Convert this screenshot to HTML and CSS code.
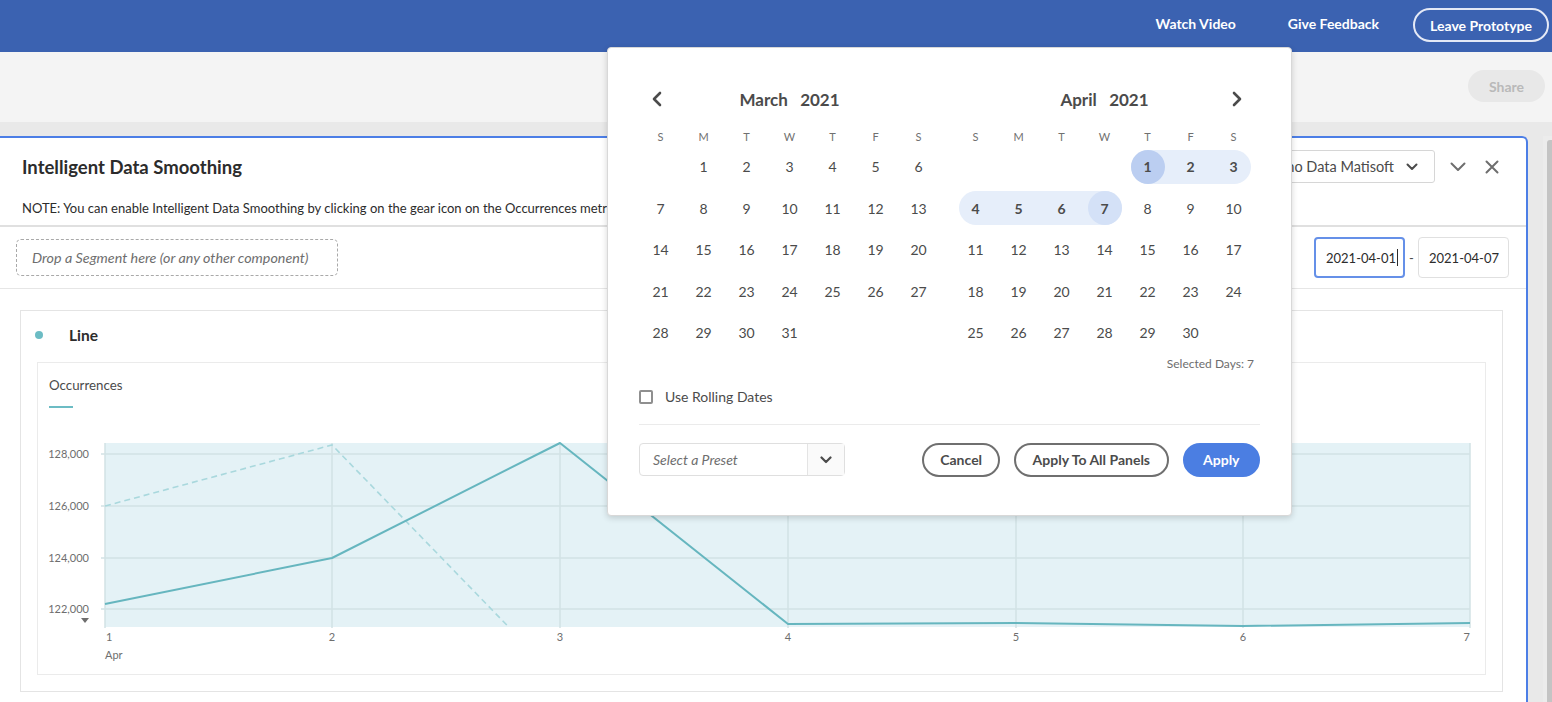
FILE: index.html
```html
<!DOCTYPE html>
<html lang="en">
<head>
<meta charset="utf-8">
<title>Intelligent Data Smoothing</title>
<link rel="stylesheet" href="styles.css">
</head>
<body>
<header class="topbar">
  <span class="top-link watch">Watch Video</span>
  <span class="top-link feedback">Give Feedback</span>
  <span class="leave">Leave Prototype</span>
</header>
<div class="toolbar">
  <span class="share">Share</span>
</div>
<div class="workspace">
  <section class="panel">
    <div class="panel-head">
      <div class="title-row">
        <h1 class="title">Intelligent Data Smoothing</h1>
        <div class="head-right">
          <div class="suite">Demo Data Matisoft
            <svg class="suite-chev" width="12" height="8" viewBox="0 0 12 8"><path d="M1.5 1.5 L6 6 L10.5 1.5" fill="none" stroke="#4b4b4b" stroke-width="2" stroke-linecap="round" stroke-linejoin="round"/></svg>
          </div>
          <svg class="collapse" width="16" height="10" viewBox="0 0 16 10"><path d="M1.5 1.5 L8 8 L14.5 1.5" fill="none" stroke="#6e6e6e" stroke-width="2" stroke-linecap="round" stroke-linejoin="round"/></svg>
          <svg class="close" width="14" height="14" viewBox="0 0 14 14"><path d="M1.5 1.5 L12.5 12.5 M12.5 1.5 L1.5 12.5" fill="none" stroke="#6e6e6e" stroke-width="2" stroke-linecap="round"/></svg>
        </div>
      </div>
      <p class="note">NOTE: You can enable Intelligent Data Smoothing by clicking on the gear icon on the Occurrences metric.</p>
    </div>
    <div class="segment-row">
      <div class="dropzone">Drop a Segment here (or any other component)</div>
      <div class="dates">
        <div class="date-in focus">2021-04-01<span class="caret"></span></div>
        <span class="dash">-</span>
        <div class="date-in">2021-04-07</div>
      </div>
    </div>
    <div class="content">
      <div class="viz">
        <div class="viz-head"><span class="dot"></span><span class="viz-title">Line</span></div>
        <div class="chart">
          <div class="legend">Occurrences</div>
          <div class="legend-line"></div>
          <svg class="plot" width="1447" height="264" viewBox="0 0 1447 264">
            <defs><clipPath id="pc"><rect x="67" y="33" width="1365" height="184"/></clipPath></defs>
            <rect x="67" y="33" width="1365" height="184" fill="#e4f2f6"/>
            <g stroke="#d2e2e5" stroke-width="1.5">
              <line x1="63" y1="44" x2="1432" y2="44"/>
              <line x1="63" y1="96" x2="1432" y2="96"/>
              <line x1="63" y1="148" x2="1432" y2="148"/>
              <line x1="63" y1="199" x2="1432" y2="199"/>
              <line x1="67" y1="33" x2="67" y2="218"/>
              <line x1="294" y1="33" x2="294" y2="218"/>
              <line x1="522" y1="33" x2="522" y2="218"/>
              <line x1="750" y1="33" x2="750" y2="218"/>
              <line x1="978" y1="33" x2="978" y2="218"/>
              <line x1="1205" y1="33" x2="1205" y2="218"/>
              <line x1="1432" y1="33" x2="1432" y2="218"/>
            </g>
            <g class="ylab" text-anchor="end">
              <text x="51" y="48">128,000</text>
              <text x="51" y="100">126,000</text>
              <text x="51" y="152">124,000</text>
              <text x="51" y="203">122,000</text>
            </g>
            <path d="M43 208 L51 208 L47 213 Z" fill="#6e6e6e"/>
            <g class="xlab">
              <text x="68" y="231">1</text>
              <text x="67" y="249">Apr</text>
              <text x="294" y="231" text-anchor="middle">2</text>
              <text x="522" y="231" text-anchor="middle">3</text>
              <text x="750" y="231" text-anchor="middle">4</text>
              <text x="978" y="231" text-anchor="middle">5</text>
              <text x="1205" y="231" text-anchor="middle">6</text>
              <text x="1432" y="231" text-anchor="end">7</text>
            </g>
            <g clip-path="url(#pc)">
              <polyline points="67,96 294,35 560,309" fill="none" stroke="#a9d8dd" stroke-width="1.6" stroke-dasharray="6 4"/>
            </g>
            <polyline points="67,194 294,148 522,33 750,214 978,213 1205,216 1432,213" fill="none" stroke="#66b6bf" stroke-width="2" stroke-linejoin="round"/>
          </svg>
        </div>
      </div>
    </div>
  </section>
  <div class="scroll-track"><div class="scroll-thumb"></div></div>
</div>

<div class="popup">
  <div class="months">
    <div class="month">
      <div class="month-head">
        <svg class="arrow" width="12" height="16" viewBox="0 0 12 16"><path d="M9 2 L3 8 L9 14" fill="none" stroke="#4b4b4b" stroke-width="2.6" stroke-linecap="round" stroke-linejoin="round"/></svg>
        <div class="month-title">March&nbsp;&nbsp; 2021</div>
        <span></span>
      </div>
      <div class="wk"><span>S</span><span>M</span><span>T</span><span>W</span><span>T</span><span>F</span><span>S</span></div>
      <div class="days">
        <div class="c"></div><div class="c"><span>1</span></div><div class="c"><span>2</span></div><div class="c"><span>3</span></div><div class="c"><span>4</span></div><div class="c"><span>5</span></div><div class="c"><span>6</span></div>
        <div class="c"><span>7</span></div><div class="c"><span>8</span></div><div class="c"><span>9</span></div><div class="c"><span>10</span></div><div class="c"><span>11</span></div><div class="c"><span>12</span></div><div class="c"><span>13</span></div>
        <div class="c"><span>14</span></div><div class="c"><span>15</span></div><div class="c"><span>16</span></div><div class="c"><span>17</span></div><div class="c"><span>18</span></div><div class="c"><span>19</span></div><div class="c"><span>20</span></div>
        <div class="c"><span>21</span></div><div class="c"><span>22</span></div><div class="c"><span>23</span></div><div class="c"><span>24</span></div><div class="c"><span>25</span></div><div class="c"><span>26</span></div><div class="c"><span>27</span></div>
        <div class="c"><span>28</span></div><div class="c"><span>29</span></div><div class="c"><span>30</span></div><div class="c"><span>31</span></div>
      </div>
    </div>
    <div class="month">
      <div class="month-head">
        <span></span>
        <div class="month-title">April&nbsp;&nbsp; 2021</div>
        <svg class="arrow" width="12" height="16" viewBox="0 0 12 16"><path d="M3 2 L9 8 L3 14" fill="none" stroke="#4b4b4b" stroke-width="2.6" stroke-linecap="round" stroke-linejoin="round"/></svg>
      </div>
      <div class="wk"><span>S</span><span>M</span><span>T</span><span>W</span><span>T</span><span>F</span><span>S</span></div>
      <div class="days">
        <div class="c"></div><div class="c"></div><div class="c"></div><div class="c"></div><div class="c in l cap1"><span>1</span></div><div class="c in"><span>2</span></div><div class="c in rt"><span>3</span></div>
        <div class="c in l"><span>4</span></div><div class="c in"><span>5</span></div><div class="c in"><span>6</span></div><div class="c in rt cap2"><span>7</span></div><div class="c"><span>8</span></div><div class="c"><span>9</span></div><div class="c"><span>10</span></div>
        <div class="c"><span>11</span></div><div class="c"><span>12</span></div><div class="c"><span>13</span></div><div class="c"><span>14</span></div><div class="c"><span>15</span></div><div class="c"><span>16</span></div><div class="c"><span>17</span></div>
        <div class="c"><span>18</span></div><div class="c"><span>19</span></div><div class="c"><span>20</span></div><div class="c"><span>21</span></div><div class="c"><span>22</span></div><div class="c"><span>23</span></div><div class="c"><span>24</span></div>
        <div class="c"><span>25</span></div><div class="c"><span>26</span></div><div class="c"><span>27</span></div><div class="c"><span>28</span></div><div class="c"><span>29</span></div><div class="c"><span>30</span></div>
      </div>
    </div>
  </div>
  <div class="selected">Selected Days: 7</div>
  <label class="rolling"><span class="box"></span>Use Rolling Dates</label>
  <div class="divider"></div>
  <div class="actions">
    <div class="preset">
      <span class="preset-text">Select a Preset</span>
      <span class="preset-btn"><svg width="12" height="8" viewBox="0 0 12 8"><path d="M1.5 1.5 L6 6 L10.5 1.5" fill="none" stroke="#4b4b4b" stroke-width="2.2" stroke-linecap="round" stroke-linejoin="round"/></svg></span>
    </div>
    <div class="btns">
      <span class="btn cancel">Cancel</span>
      <span class="btn all">Apply To All Panels</span>
      <span class="btn primary">Apply</span>
    </div>
  </div>
</div>
</body>
</html>
```
FILE: styles.css
```css
* { box-sizing: border-box; }
body {
  margin: 0;
  width: 1552px;
  height: 702px;
  overflow: hidden;
  position: relative;
  font-family: "Lato", "Noto Sans", sans-serif;
  color: #2c2c2c;
  background: #e9e9e9;
}
.topbar {
  height: 52px;
  background: #3b62b1;
  display: flex;
  justify-content: flex-end;
  align-items: center;
  padding: 0 3px 5px 0;
}
.top-link {
  color: #fff;
  font-size: 14px;
  font-weight: 700;
}
.watch { margin-right: 52px; }
.feedback { margin-right: 34px; }
.leave {
  height: 34px;
  margin-top: 3px;
  border: 2px solid #e4e9f6;
  border-radius: 17px;
  padding: 0 15px;
  display: flex;
  align-items: center;
  color: #fff;
  font-size: 14px;
  font-weight: 700;
}
.toolbar {
  height: 70px;
  background: #f4f4f4;
  display: flex;
  justify-content: flex-end;
  align-items: center;
  padding: 0 7px 2px 0;
}
.share {
  width: 77px;
  height: 32px;
  border-radius: 16px;
  background: #e8e8e8;
  color: #b9b9b9;
  font-weight: 700;
  font-size: 14px;
  display: flex;
  align-items: center;
  justify-content: center;
}
.workspace {
  height: 580px;
  padding-top: 14px;
  display: flex;
  background: #e9e9e9;
}
.panel {
  width: 1528px;
  height: 566px;
  background: #fff;
  border-top: 2px solid #4c7ee6;
  border-right: 2px solid #4c7ee6;
  border-top-right-radius: 6px;
}
.scroll-track {
  margin-left: auto;
  width: 9px;
  padding-top: 4px;
  background: #ececec;
}
.scroll-thumb {
  margin-left: 4px;
  width: 5px;
  height: 100%;
  background: #c4c4c4;
  border-radius: 3px 0 0 0;
}
.panel-head {
  padding: 12px 27px 9px 22px;
  border-bottom: 2px solid #e0e0e0;
}
.title-row {
  height: 33px;
  display: flex;
  align-items: center;
  justify-content: space-between;
}
.title {
  margin: 0;
  font-size: 18.5px;
  font-weight: 700;
  color: #2c2c2c;
}
.head-right {
  display: flex;
  align-items: center;
}
.suite {
  height: 33px;
  border: 1px solid #d6d6d6;
  border-radius: 3px;
  padding: 0 16px 0 12px;
  display: flex;
  align-items: center;
  font-size: 14.5px;
  color: #4b4b4b;
}
.suite-chev { margin-left: 12px; }
.collapse { margin-left: 15px; }
.close { margin-left: 19px; }
.note {
  margin: 17px 0 0;
  font-size: 13px;
  line-height: 16px;
  white-space: nowrap;
  color: #2c2c2c;
}
.segment-row {
  height: 62px;
  display: flex;
  align-items: center;
  justify-content: space-between;
  padding: 0 17px 0 16px;
  border-bottom: 1px solid #e6e6e6;
}
.dropzone {
  width: 322px;
  height: 37px;
  border: 1px dashed #a9a9a9;
  border-radius: 5px;
  padding-left: 15px;
  display: flex;
  align-items: center;
  font-style: italic;
  font-size: 14.3px;
  color: #6e6e6e;
}
.dates {
  display: flex;
  align-items: center;
}
.date-in {
  width: 91px;
  height: 41px;
  border: 1px solid #e0e0e0;
  border-radius: 4px;
  padding-left: 10px;
  display: flex;
  align-items: center;
  font-size: 13px;
  color: #2c2c2c;
}
.date-in.focus {
  border: 2px solid #6590e8;
}
.caret {
  display: inline-block;
  width: 1px;
  height: 17px;
  background: #2c2c2c;
  margin-left: 1px;
}
.dash {
  width: 13px;
  text-align: center;
  font-size: 13px;
  color: #4b4b4b;
}
.content {
  padding: 21px 23px 0 20px;
}
.viz {
  height: 382px;
  border: 1px solid #e4e4e4;
  padding-bottom: 16px;
}
.viz-head {
  height: 51px;
  padding: 0 0 3px 14px;
  display: flex;
  align-items: center;
}
.dot {
  width: 8px;
  height: 8px;
  border-radius: 50%;
  background: #6cbcc4;
}
.viz-title {
  margin-left: 26px;
  font-size: 15.5px;
  font-weight: 700;
  color: #2c2c2c;
}
.chart {
  margin: 0 16px;
  height: 313px;
  border: 1px solid #ebebeb;
  padding-top: 14px;
}
.legend {
  margin-left: 11px;
  font-size: 13.3px;
  line-height: 16px;
  color: #4b4b4b;
}
.legend-line {
  margin: 13px 0 2px 11px;
  width: 24px;
  height: 2px;
  background: #6cbcc4;
}
.plot { display: block; }
.ylab text, .xlab text {
  font-family: "Lato", "Noto Sans", sans-serif;
  font-size: 11px;
  fill: #6e6e6e;
}
.popup {
  position: absolute;
  left: 607px;
  top: 47px;
  width: 685px;
  height: 469px;
  background: #fff;
  border: 1px solid #d8d8d8;
  border-radius: 4px;
  box-shadow: 0 2px 6px rgba(0, 0, 0, 0.16);
  padding: 35px 31px 0;
  color: #4b4b4b;
}
.months {
  display: flex;
  gap: 14px;
}
.month { width: 301px; }
.month-head {
  height: 32px;
  display: grid;
  grid-template-columns: 36px 1fr 36px;
  align-items: center;
  justify-items: center;
}
.month-title {
  font-size: 17px;
  font-weight: 700;
  color: #4b4b4b;
}
.wk {
  margin-top: 12px;
  height: 19px;
  display: grid;
  grid-template-columns: repeat(7, 43px);
  font-size: 11px;
  color: #707070;
  line-height: 19px;
  text-align: center;
}
.days {
  display: grid;
  grid-template-columns: repeat(7, 43px);
  grid-auto-rows: 41.5px;
}
.c {
  position: relative;
  display: flex;
  align-items: center;
  justify-content: center;
  font-size: 14px;
  color: #4b4b4b;
}
.c span { position: relative; z-index: 1; }
.c.in { font-weight: 700; }
.c.in::before {
  content: "";
  position: absolute;
  top: 3.75px;
  height: 34px;
  left: 0;
  right: 0;
  background: #e6eefa;
}
.c.l::before { left: 4.5px; border-radius: 17px 0 0 17px; }
.c.rt::before { right: 4.5px; border-radius: 0 17px 17px 0; }
.c.cap1::after, .c.cap2::after {
  content: "";
  position: absolute;
  top: 3.75px;
  left: 4.5px;
  width: 34px;
  height: 34px;
  border-radius: 50%;
}
.c.cap1::after { background: #bbcef1; }
.c.cap2::after { background: #d4e1f7; }
.selected {
  margin-top: 2px;
  text-align: right;
  padding-right: 6px;
  font-size: 12px;
  line-height: 16px;
  color: #6e6e6e;
}
.rolling {
  margin-top: 15px;
  height: 20px;
  display: flex;
  align-items: center;
  font-size: 14px;
  color: #4b4b4b;
}
.box {
  width: 14px;
  height: 14px;
  border: 2px solid #8f8f8f;
  border-radius: 2px;
  margin-right: 12px;
}
.divider {
  margin-top: 17px;
  border-top: 1px solid #ebebeb;
}
.actions {
  margin-top: 18px;
  height: 34px;
  display: flex;
  align-items: center;
}
.preset {
  width: 206px;
  height: 33px;
  border: 1px solid #dfdfdf;
  border-radius: 4px;
  display: flex;
}
.preset-text {
  flex: 1;
  padding-left: 13px;
  display: flex;
  align-items: center;
  font-style: italic;
  font-size: 14px;
  color: #6e6e6e;
}
.preset-btn {
  width: 37px;
  border-left: 1px solid #e4e4e4;
  background: #fafafa;
  display: flex;
  align-items: center;
  justify-content: center;
}
.btns {
  margin-left: auto;
  display: flex;
  gap: 14px;
}
.btn {
  height: 34px;
  border: 2px solid #6f6f6f;
  border-radius: 17px;
  display: flex;
  align-items: center;
  font-size: 14px;
  font-weight: 700;
  color: #4b4b4b;
}
.btn.cancel { padding: 0 16px; }
.btn.all { padding: 0 16.5px; }
.btn.primary {
  background: #4b7ee2;
  border-color: #4b7ee2;
  color: #fff;
  padding: 0 18.5px;
}
```
